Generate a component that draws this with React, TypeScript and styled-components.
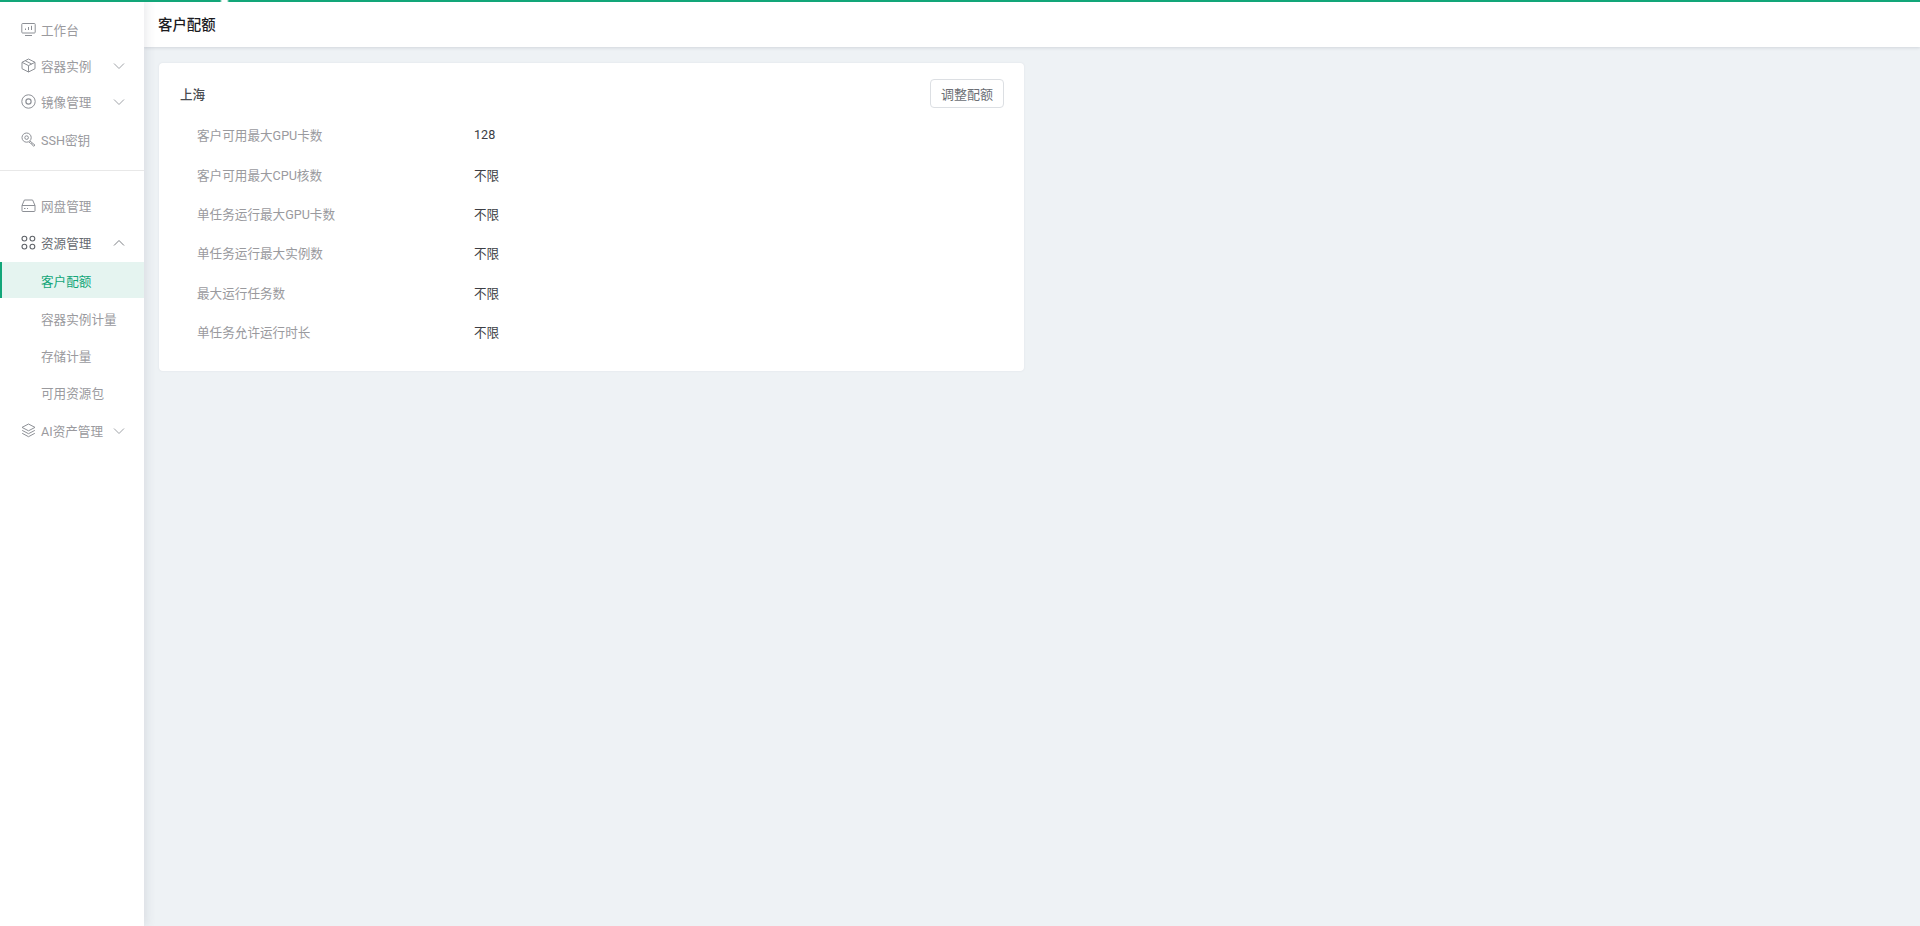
import React from 'react';
import styled, { createGlobalStyle } from 'styled-components';

const FONT = `Roboto, "Noto Sans CJK SC", "Noto Sans", sans-serif`;

const Global = createGlobalStyle`
  html, body { margin: 0; padding: 0; height: 100%; overflow: hidden; }
  body { font-family: ${FONT}; background: #eef2f5; }
`;

const Page = styled.div`
  position: relative;
  display: flex;
  width: 1920px;
  height: 926px;
  background: #eef2f5;
  overflow: hidden;
`;

const ProgressBar = styled.div`
  position: absolute;
  top: 0;
  left: 0;
  right: 0;
  height: 2px;
  z-index: 5;
  background: linear-gradient(to right, #12a679 0 220px, #fff 222px 227px, #12a679 229px);
`;

const Sidebar = styled.aside`
  flex: 0 0 144px;
  width: 144px;
  height: 100%;
  background: #fff;
  box-shadow: 3px 0 9px rgba(60, 70, 90, 0.1);
  z-index: 2;
  padding-top: 11px;
  box-sizing: border-box;
`;

const NavGroup = styled.nav<{ $gap: number }>`
  display: flex;
  flex-direction: column;
  gap: ${p => p.$gap}px;
`;

const Divider = styled.div`
  height: 1px;
  background: #e8e8e8;
  margin: 13px 0 16px;
`;

const NavItem = styled.div<{ $dark?: boolean; $mt?: number }>`
  display: flex;
  align-items: center;
  height: 36px;
  padding-left: 21px;
  margin-top: ${p => p.$mt ?? 0}px;
  font-size: 12.6px;
  color: ${p => (p.$dark ? '#666a70' : '#9a9a9e')};
  white-space: nowrap;
`;

const IconWrap = styled.span`
  display: inline-flex;
  width: 15px;
  height: 15px;
  margin-right: 5px;
  color: #8d9096;
  svg { display: block; }
`;

const Chevron = styled.svg`
  position: absolute;
  left: 113px;
  top: 15px;
  width: 12px;
  height: 8px;
`;

const ItemRow = styled(NavItem)`
  position: relative;
`;

const SubItem = styled.div<{ $active?: boolean; $mt?: number }>`
  display: flex;
  align-items: center;
  height: 36px;
  padding-left: ${p => (p.$active ? 39 : 41)}px;
  margin-top: ${p => p.$mt ?? 0}px;
  font-size: 12.6px;
  white-space: nowrap;
  color: ${p => (p.$active ? '#12a679' : '#9a9a9e')};
  background: ${p => (p.$active ? '#e5f4f0' : 'transparent')};
  border-left: ${p => (p.$active ? '2px solid #12a679' : 'none')};
`;

const Main = styled.main`
  flex: 1;
  display: flex;
  flex-direction: column;
  min-width: 0;
`;

const Header = styled.header`
  height: 47px;
  flex: 0 0 47px;
  background: #fff;
  display: flex;
  align-items: center;
  padding-left: 14px;
  box-sizing: border-box;
  font-size: 14.4px;
  font-weight: 500;
  color: #1c1c1f;
  box-shadow: 0 1px 3px rgba(60, 70, 90, 0.16);
  z-index: 1;
`;

const Content = styled.div`
  padding: 16px 15px;
`;

const Card = styled.section`
  width: 865px;
  height: 308px;
  background: #fff;
  border-radius: 4px;
  box-shadow: 0 0 2px rgba(60, 70, 90, 0.1);
  padding: 16px 20px 0 21px;
  box-sizing: border-box;
`;

const CardHead = styled.div`
  display: flex;
  align-items: center;
  justify-content: space-between;
  height: 29px;
`;

const Region = styled.h2`
  margin: 0;
  font-size: 12.6px;
  font-weight: 500;
  color: #4a4d52;
`;

const AdjustButton = styled.button`
  width: 74px;
  height: 29px;
  padding: 0;
  background: #fff;
  border: 1px solid #dcdfe3;
  border-radius: 4px;
  font-family: ${FONT};
  font-size: 13px;
  color: #6b6e74;
`;

const Rows = styled.div`
  margin-top: 7px;
  padding-left: 17px;
  display: grid;
  grid-auto-rows: 39.4px;
`;

const Row = styled.div`
  display: grid;
  grid-template-columns: 277px 1fr;
  align-items: center;
  font-size: 12.6px;
`;

const Label = styled.span`
  color: #9a9a9e;
`;

const Value = styled.span`
  color: #3c3e44;
`;

const stroke = { fill: 'none', stroke: 'currentColor', strokeWidth: 1 } as const;

const MonitorIcon = () => (
  <svg width="15" height="15" viewBox="0 0 15 15" {...stroke}>
    <rect x="0.8" y="1.5" width="13.4" height="9.5" rx="0.8" />
    <path d="M4 13.5h7M4.5 8V6.5M7.5 8V5M10.5 8V3.8" />
  </svg>
);
const BoxIcon = () => (
  <svg width="15" height="15" viewBox="0 0 15 15" {...stroke}>
    <path d="M7.5 1 14 4.3v6.4L7.5 14 1 10.7V4.3Z" />
    <path d="M1 4.3 7.5 7.6 14 4.3M7.5 7.6V14M4.2 2.7l6.5 3.3" />
  </svg>
);
const DiscIcon = () => (
  <svg width="15" height="15" viewBox="0 0 15 15" {...stroke}>
    <circle cx="7.5" cy="7.5" r="6.7" />
    <circle cx="7.5" cy="7.5" r="2.6" strokeWidth="1.2" />
  </svg>
);
const KeyIcon = () => (
  <svg width="15" height="15" viewBox="0 0 15 15" {...stroke}>
    <circle cx="5.6" cy="5.6" r="4.6" />
    <circle cx="5.6" cy="5.6" r="1.8" />
    <path d="M9 9l5 4.2-1.2 1-1.6-1.2-.6-1.4-1-.2L8 10" />
  </svg>
);
const DriveIcon = () => (
  <svg width="15" height="15" viewBox="0 0 15 15" {...stroke}>
    <path d="M3.4 2h8.2L14 7.5v5.2a.8.8 0 0 1-.8.8H1.8a.8.8 0 0 1-.8-.8V7.5Z" />
    <path d="M1 7.5h13M3 10.5h1.5M6 10.5h1" />
  </svg>
);
const GridIcon = () => (
  <svg width="15" height="15" viewBox="0 0 15 15" fill="none" stroke="#5f6369" strokeWidth="1.1">
    <circle cx="3.4" cy="3.6" r="2.4" />
    <circle cx="11.4" cy="3.6" r="2.4" />
    <circle cx="3.4" cy="11.6" r="2.4" />
    <circle cx="11.4" cy="11.6" r="2.4" />
  </svg>
);
const LayersIcon = () => (
  <svg width="15" height="15" viewBox="0 0 15 15" {...stroke}>
    <path d="M7.5 1 14 4.4 7.5 7.8 1 4.4Z" />
    <path d="M1.2 7.4l6.3 3.3 6.3-3.3M1.2 10.3l6.3 3.4 6.3-3.4" />
  </svg>
);

const Arrow = ({ up }: { up?: boolean }) => (
  <Chevron viewBox="0 0 12 8" fill="none" stroke={up ? '#7d8085' : '#a0a3a8'} strokeWidth="1">
    <path d={up ? 'M1 6.5 6 1.5l5 5' : 'M1 1.5l5 5 5-5'} />
  </Chevron>
);

const quota: [string, string][] = [
  ['客户可用最大GPU卡数', '128'],
  ['客户可用最大CPU核数', '不限'],
  ['单任务运行最大GPU卡数', '不限'],
  ['单任务运行最大实例数', '不限'],
  ['最大运行任务数', '不限'],
  ['单任务允许运行时长', '不限'],
];

export default function App() {
  return (
    <Page>
      <Global />
      <ProgressBar />
      <Sidebar>
        <NavGroup $gap={0}>
          <NavItem><IconWrap><MonitorIcon /></IconWrap>工作台</NavItem>
          <ItemRow><IconWrap><BoxIcon /></IconWrap>容器实例<Arrow /></ItemRow>
          <ItemRow><IconWrap><DiscIcon /></IconWrap>镜像管理<Arrow /></ItemRow>
          <NavItem $mt={2}><IconWrap><KeyIcon /></IconWrap>SSH密钥</NavItem>
        </NavGroup>
        <Divider />
        <NavGroup $gap={1}>
          <NavItem><IconWrap><DriveIcon /></IconWrap>网盘管理</NavItem>
          <ItemRow $dark><IconWrap><GridIcon /></IconWrap>资源管理<Arrow up /></ItemRow>
          <SubItem $active $mt={1}>客户配额</SubItem>
          <SubItem $mt={1}>容器实例计量</SubItem>
          <SubItem>存储计量</SubItem>
          <SubItem>可用资源包</SubItem>
          <ItemRow $mt={1}><IconWrap><LayersIcon /></IconWrap>AI资产管理<Arrow /></ItemRow>
        </NavGroup>
      </Sidebar>
      <Main>
        <Header>客户配额</Header>
        <Content>
          <Card>
            <CardHead>
              <Region>上海</Region>
              <AdjustButton>调整配额</AdjustButton>
            </CardHead>
            <Rows>
              {quota.map(([k, v]) => (
                <Row key={k}>
                  <Label>{k}</Label>
                  <Value>{v}</Value>
                </Row>
              ))}
            </Rows>
          </Card>
        </Content>
      </Main>
    </Page>
  );
}
